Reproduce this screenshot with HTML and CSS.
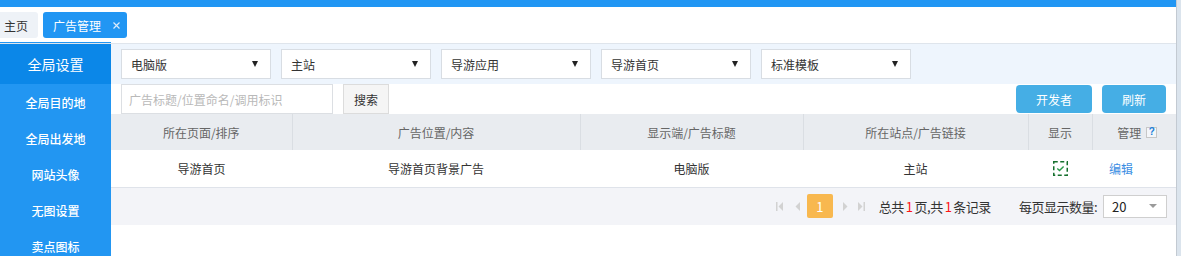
FILE: index.html
```html
<!DOCTYPE html>
<html lang="zh-CN">
<head>
<meta charset="utf-8">
<title>广告管理</title>
<link rel="stylesheet" href="styles.css">
</head>
<body>
<div class="screen">
  <div class="app">
    <div class="topbar"></div>
    <div class="tabbar">
      <div class="tab">主页</div>
      <div class="tab tab-active">广告管理
        <svg class="tab-close" width="7" height="7" viewBox="0 0 7 7"><path d="M0.5 0.5L6.5 6.5M6.5 0.5L0.5 6.5" stroke="#dcebfb" stroke-width="1.2"/></svg>
      </div>
    </div>
    <div class="body">
      <aside class="sidebar">
        <div class="side-head">全局设置</div>
        <div class="side-item">全局目的地</div>
        <div class="side-item">全局出发地</div>
        <div class="side-item">网站头像</div>
        <div class="side-item">无图设置</div>
        <div class="side-item">卖点图标</div>
      </aside>
      <main class="main">
        <div class="filters">
          <div class="select"><span>电脑版</span><i class="caret"></i></div>
          <div class="select"><span>主站</span><i class="caret"></i></div>
          <div class="select"><span>导游应用</span><i class="caret"></i></div>
          <div class="select"><span>导游首页</span><i class="caret"></i></div>
          <div class="select"><span>标准模板</span><i class="caret"></i></div>
        </div>
        <div class="searchrow">
          <input class="search-input" type="text" placeholder="广告标题/位置命名/调用标识">
          <button class="btn-search">搜索</button>
          <div class="spacer"></div>
          <button class="btn-blue btn-dev">开发者</button>
          <button class="btn-blue btn-refresh">刷新</button>
        </div>
        <table class="grid">
          <colgroup>
            <col class="c1"><col class="c2"><col class="c3"><col class="c4"><col class="c5"><col class="c6">
          </colgroup>
          <thead>
            <tr>
              <th>所在页面/排序</th>
              <th>广告位置/内容</th>
              <th>显示端/广告标题</th>
              <th>所在站点/广告链接</th>
              <th>显示</th>
              <th><span class="th-manage">管理<span class="help">?</span></span></th>
            </tr>
          </thead>
          <tbody>
            <tr>
              <td>导游首页</td>
              <td>导游首页背景广告</td>
              <td>电脑版</td>
              <td>主站</td>
              <td><svg class="check" width="15" height="15" viewBox="0 0 15 15"><rect x="0.75" y="0.75" width="13.5" height="13.5" fill="none" stroke="#16702e" stroke-width="1.5" stroke-dasharray="4 2.5"/><path d="M4.3 7.6L6.5 9.6L10.6 5.4" fill="none" stroke="#2a9a4a" stroke-width="1.4"/></svg></td>
              <td class="td-edit"><a class="edit">编辑</a></td>
            </tr>
          </tbody>
        </table>
        <div class="pager">
          <svg class="pg-first" width="7" height="9" viewBox="0 0 7 9"><rect x="0" y="0" width="1.5" height="9" fill="#d2d2d2"/><path d="M7 0L2.5 4.5L7 9Z" fill="#d2d2d2"/></svg>
          <svg class="pg-prev" width="5" height="9" viewBox="0 0 5 9"><path d="M5 0L0.5 4.5L5 9Z" fill="#d2d2d2"/></svg>
          <span class="pg-num">1</span>
          <svg class="pg-next" width="5" height="9" viewBox="0 0 5 9"><path d="M0 0L4.5 4.5L0 9Z" fill="#d2d2d2"/></svg>
          <svg class="pg-last" width="7" height="9" viewBox="0 0 7 9"><path d="M0 0L4.5 4.5L0 9Z" fill="#d2d2d2"/><rect x="5.5" y="0" width="1.5" height="9" fill="#d2d2d2"/></svg>
          <span class="pg-info">总共<em>1</em>页,共<em>1</em>条记录</span>
          <span class="pg-label">每页显示数量:</span>
          <div class="pg-size"><span>20</span><i class="pg-caret"></i></div>
        </div>
      </main>
    </div>
  </div>
  <div class="scrollstrip"></div>
</div>
</body>
</html>
```

FILE: styles.css
```css
* { box-sizing: border-box; }
html, body { margin: 0; padding: 0; }
body {
  width: 1181px;
  height: 256px;
  overflow: hidden;
  background: #fff;
  font-family: "Noto Sans CJK SC", "Liberation Sans", sans-serif;
  font-size: 12px;
  color: #333;
}
.screen { display: flex; height: 256px; }
.app { flex: 1; display: flex; flex-direction: column; min-width: 0; }
.scrollstrip {
  width: 5px;
  border-left: 1px solid #c3cad2;
  background: #dbe4ed;
}
.topbar { height: 7px; background: #2196f3; }
.tabbar {
  height: 37px;
  display: flex;
  align-items: flex-start;
  gap: 5px;
  padding-top: 5px;
  border-bottom: 1px solid #dfe5ec;
  background: linear-gradient(#2196f3, #2196f3) no-repeat left bottom / 111px 1px, #fff;
}
.tab {
  height: 26px;
  display: flex;
  align-items: center;
  padding: 0 10px 0 4px;
  background: #eef2f7;
  border-radius: 0 3px 3px 0;
  color: #333;
}
.tab-active {
  background: #2196f3;
  color: #fff;
  padding: 0 7px 0 10px;
  border-radius: 3px;
}
.tab-close { margin-left: 12px; }
.body { flex: 1; display: flex; min-height: 0; }
.sidebar {
  width: 111px;
  flex: none;
  background: #2296f2;
  color: #fff;
}
.side-head {
  height: 40px;
  display: flex;
  align-items: center;
  justify-content: center;
  background: #0b87e8;
  font-size: 14px;
}
.side-item {
  height: 36px;
  display: flex;
  align-items: center;
  justify-content: center;
  font-weight: 500;
}
.main { flex: 1; min-width: 0; display: flex; flex-direction: column; }
.filters {
  height: 40px;
  display: flex;
  gap: 10px;
  align-items: center;
  padding: 0 10px;
  background: #eef5fd;
}
.select {
  width: 150px;
  height: 30px;
  display: flex;
  align-items: center;
  justify-content: space-between;
  padding: 0 12px 0 9px;
  background: #fff;
  border: 1px solid #d8dde3;
  color: #333;
}
.caret {
  width: 0; height: 0;
  border-left: 3px solid transparent;
  border-right: 3px solid transparent;
  border-top: 6px solid #222;
}
.searchrow {
  height: 30px;
  display: flex;
  align-items: flex-start;
  padding: 0 10px;
  gap: 10px;
}
.search-input {
  width: 212px;
  height: 30px;
  border: 1px solid #dcdfe3;
  padding: 0 0 0 7px;
  font: inherit;
  color: #333;
  outline: none;
}
.search-input::placeholder { color: #b9b9b9; }
.btn-search {
  width: 46px;
  height: 30px;
  border: 1px solid #dcdcdc;
  background: #f5f5f5;
  font: inherit;
  color: #333;
  padding: 0;
}
.spacer { flex: 1; }
.btn-blue {
  height: 28px;
  margin-top: 1px;
  border: none;
  border-radius: 4px;
  background: #45aee5;
  color: #fff;
  font: inherit;
  padding: 0;
}
.btn-dev { width: 76px; }
.btn-refresh { width: 64px; }
.grid {
  width: 100%;
  table-layout: fixed;
  border-collapse: collapse;
}
.c1 { width: 181px; }
.c2 { width: 288px; }
.c3 { width: 223px; }
.c4 { width: 225px; }
.c5 { width: 64px; }
.c6 { width: 84px; }
.grid th {
  height: 36px;
  background: #e9ecf0;
  color: #666;
  font-weight: normal;
  text-align: center;
  border-left: 1px solid #dadee3;
  padding: 0;
}
.grid th:first-child { border-left: none; }
.grid td {
  height: 37px;
  text-align: center;
  border-bottom: 1px solid #dfe3ea;
  padding: 0;
  color: #333;
}
.th-manage { display: inline-flex; align-items: center; gap: 5px; margin-left: 6px; }
.help {
  width: 11px;
  height: 11px;
  display: inline-flex;
  align-items: center;
  justify-content: center;
  border: 1px solid #c7c7c7;
  background: #f4f6f9;
  color: #1b7fd8;
  font-weight: bold;
  font-size: 10px;
  line-height: 1;
  font-family: "Liberation Sans", sans-serif;
}
.check { display: block; margin: 0 auto; }
.td-edit { padding-right: 26px !important; }
.edit { color: #3b8ee3; }
.pager {
  height: 37px;
  display: flex;
  align-items: center;
  justify-content: flex-end;
  padding-right: 9px;
  background: #f3f4f8;
}
.pg-first { margin-right: 12px; }
.pg-prev { margin-right: 7px; }
.pg-num {
  width: 26px;
  height: 24px;
  display: flex;
  align-items: center;
  justify-content: center;
  background: #f8b84f;
  color: #fff;
  border-radius: 2px;
  margin-right: 10px;
  font-size: 13px;
}
.pg-next { margin-right: 10px; }
.pg-last { margin-right: 14px; }
.pg-info { color: #333; margin-right: 28px; font-size: 13px; letter-spacing: -0.5px; }
.pg-info em { font-style: normal; color: #ff1414; margin: 0 2px; }
.pg-label { color: #333; margin-right: 6px; font-size: 13px; letter-spacing: -0.5px; }
.pg-size {
  width: 64px;
  height: 23px;
  display: flex;
  align-items: center;
  justify-content: space-between;
  padding: 0 9px 0 8px;
  background: #fff;
  border: 1px solid #cfcfcf;
  font-size: 13px;
  color: #222;
}
.pg-caret {
  width: 0; height: 0;
  border-left: 4px solid transparent;
  border-right: 4px solid transparent;
  border-top: 4px solid #9a9a9a;
}
```
